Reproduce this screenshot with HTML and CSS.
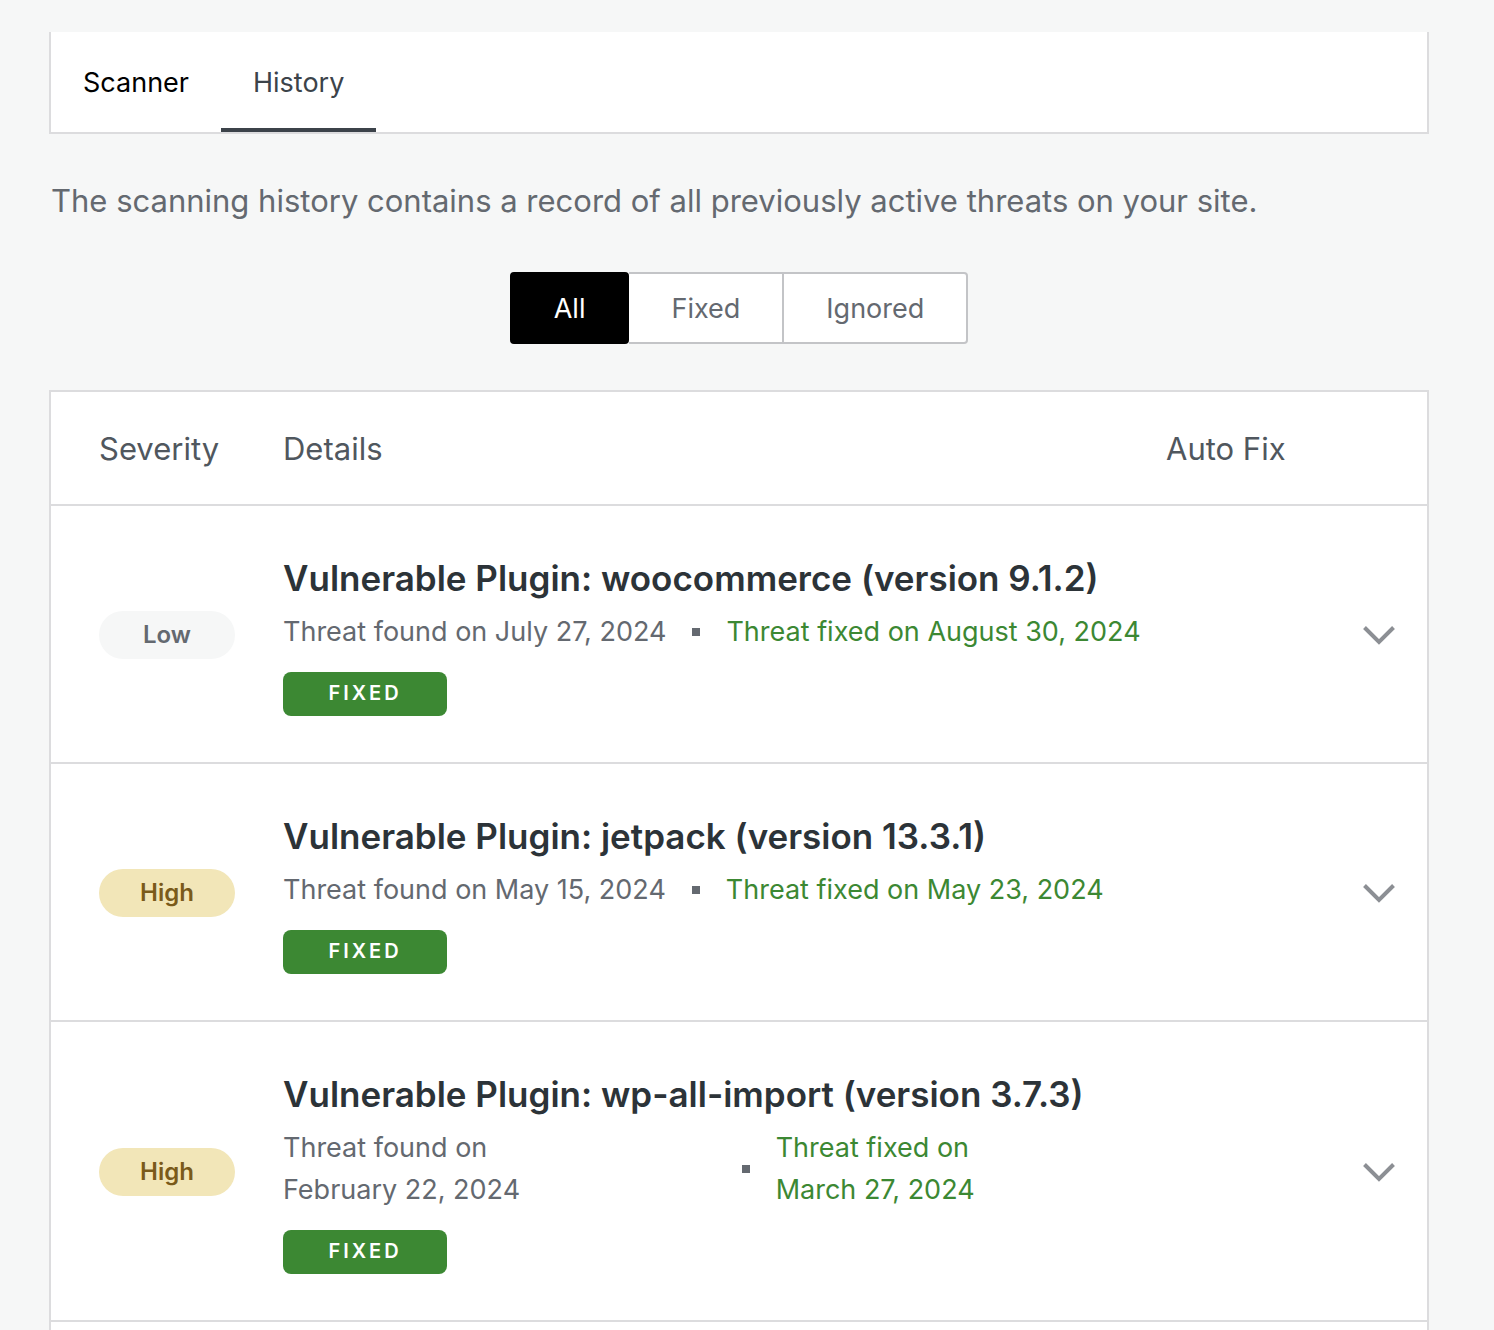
FILE: index.html
```html
<!DOCTYPE html>
<html lang="en">
<head>
    <meta charset="UTF-8">
    <meta name="viewport" content="width=device-width, initial-scale=1.0">
    <title>Scan History</title>
    <link rel="stylesheet" href="styles.css">
</head>
<body>
    <main class="container">
        <!-- Section tabs -->
        <nav class="tabs">
            <a class="tab" href="#scanner">Scanner</a>
            <a class="tab active" href="#history" aria-current="page">History</a>
        </nav>

        <p class="intro">The scanning history contains a record of all previously active threats on your site.</p>

        <!-- Filter buttons -->
        <div class="filters">
            <button type="button" class="filter selected">All</button>
            <button type="button" class="filter">Fixed</button>
            <button type="button" class="filter">Ignored</button>
        </div>

        <!-- Threat list -->
        <div class="card">
            <table class="threats">
                <thead>
                    <tr>
                        <th class="col-severity">Severity</th>
                        <th class="col-details">Details</th>
                        <th class="col-fix">Auto Fix</th>
                        <th class="col-toggle"></th>
                    </tr>
                </thead>
                <tbody>
                    <tr>
                        <td class="col-severity"><span class="severity low">Low</span></td>
                        <td class="col-details">
                            <h2 class="threat-title">Vulnerable Plugin: woocommerce (version 9.1.2)</h2>
                            <div class="dates">
                                <span class="found">Threat found on July 27, 2024</span>
                                <span class="dot"></span>
                                <span class="fixed-on">Threat fixed on August 30, 2024</span>
                            </div>
                            <span class="status">FIXED</span>
                        </td>
                        <td class="col-fix"></td>
                        <td class="col-toggle">
                            <button type="button" class="toggle" aria-label="Expand">
                                <svg class="chevron" viewBox="0 0 36 24"><path d="M3.5 4.5L18 19 32.5 4.5"/></svg>
                            </button>
                        </td>
                    </tr>
                    <tr>
                        <td class="col-severity"><span class="severity high">High</span></td>
                        <td class="col-details">
                            <h2 class="threat-title">Vulnerable Plugin: jetpack (version 13.3.1)</h2>
                            <div class="dates">
                                <span class="found">Threat found on May 15, 2024</span>
                                <span class="dot"></span>
                                <span class="fixed-on">Threat fixed on May 23, 2024</span>
                            </div>
                            <span class="status">FIXED</span>
                        </td>
                        <td class="col-fix"></td>
                        <td class="col-toggle">
                            <button type="button" class="toggle" aria-label="Expand">
                                <svg class="chevron" viewBox="0 0 36 24"><path d="M3.5 4.5L18 19 32.5 4.5"/></svg>
                            </button>
                        </td>
                    </tr>
                    <tr>
                        <td class="col-severity"><span class="severity high">High</span></td>
                        <td class="col-details">
                            <h2 class="threat-title">Vulnerable Plugin: wp-all-import (version 3.7.3)</h2>
                            <div class="dates split">
                                <span class="found">Threat found on<br>February 22, 2024</span>
                                <span class="dot"></span>
                                <span class="fixed-on">Threat fixed on<br>March 27, 2024</span>
                            </div>
                            <span class="status">FIXED</span>
                        </td>
                        <td class="col-fix"></td>
                        <td class="col-toggle">
                            <button type="button" class="toggle" aria-label="Expand">
                                <svg class="chevron" viewBox="0 0 36 24"><path d="M3.5 4.5L18 19 32.5 4.5"/></svg>
                            </button>
                        </td>
                    </tr>
                </tbody>
            </table>
        </div>
    </main>
</body>
</html>
```
FILE: styles.css
```css
* {
    box-sizing: border-box;
}

body {
    margin: 0;
    background-color: #f6f7f7;
    color: #646970;
    font-family: Inter, "Liberation Sans", sans-serif;
}

.container {
    display: flex;
    flex-direction: column;
    min-height: 100vh;
    padding: 32px 65px 0 49px;
}

.tabs {
    display: flex;
    background: #fff;
    border: 2px solid #dcdcde;
    border-top: none;
}

.tab {
    padding: 6px 32px 0;
    border-bottom: 4px solid transparent;
    color: #000;
    font-size: 27px;
    line-height: 90px;
    text-decoration: none;
}

.tab.active {
    border-bottom-color: #3c434a;
    color: #3c434a;
}

.intro {
    margin: 43px 2px 47px;
    font-size: 31px;
    line-height: 48px;
}

.filters {
    display: flex;
    justify-content: center;
    margin-bottom: 46px;
}

.filter {
    height: 72px;
    padding: 0 42px;
    background: #fff;
    border: 2px solid #c3c4c7;
    border-left: none;
    color: #646970;
    font-family: inherit;
    font-size: 27px;
    cursor: pointer;
}

.filter:last-child {
    border-radius: 0 4px 4px 0;
}

.filter.selected {
    border: 2px solid #000;
    border-radius: 4px;
    background: #000;
    color: #fff;
}

.card {
    flex: 1;
    background: #fff;
    border: 2px solid #dcdcde;
    border-bottom: none;
}

.threats {
    width: 100%;
    border-spacing: 0;
    table-layout: fixed;
}

th {
    height: 114px;
    padding: 0;
    border-bottom: 2px solid #dcdcde;
    color: #50575e;
    font-size: 31px;
    font-weight: 400;
    text-align: left;
}

td {
    padding: 48px 0 46px;
    border-bottom: 2px solid #dcdcde;
    vertical-align: middle;
}

.col-severity {
    width: 232px;
    padding-left: 48px;
}

.col-fix {
    width: 195px;
}

.col-toggle {
    width: 66px;
}

.severity {
    display: block;
    width: 136px;
    border-radius: 24px;
    font-size: 24px;
    font-weight: 600;
    line-height: 48px;
    text-align: center;
}

.severity.low {
    background: #f6f7f7;
    color: #646970;
}

.severity.high {
    background: #f2e6b8;
    color: #7a5a1a;
}

.threat-title {
    margin: 0 0 9px;
    color: #2c3338;
    font-size: 35px;
    font-weight: 600;
    line-height: 48px;
}

.dates {
    display: flex;
    align-items: center;
    gap: 26px;
    margin-bottom: 19px;
    font-size: 27px;
    line-height: 42px;
}

.dates.split .found {
    width: 49%;
}

.dot {
    width: 8px;
    height: 8px;
    background: #646970;
}

.fixed-on {
    color: #3c8833;
}

.status {
    display: block;
    width: 164px;
    border-radius: 8px;
    background: #3c8833;
    color: #fff;
    font-size: 20px;
    font-weight: 600;
    letter-spacing: 3px;
    line-height: 42px;
    padding-bottom: 2px;
    text-align: center;
}

.toggle {
    display: block;
    width: 36px;
    padding: 0;
    background: none;
    border: none;
    cursor: pointer;
}

.chevron {
    display: block;
    width: 36px;
    height: 24px;
    fill: none;
    stroke: #8c8f94;
    stroke-width: 4;
}
```
